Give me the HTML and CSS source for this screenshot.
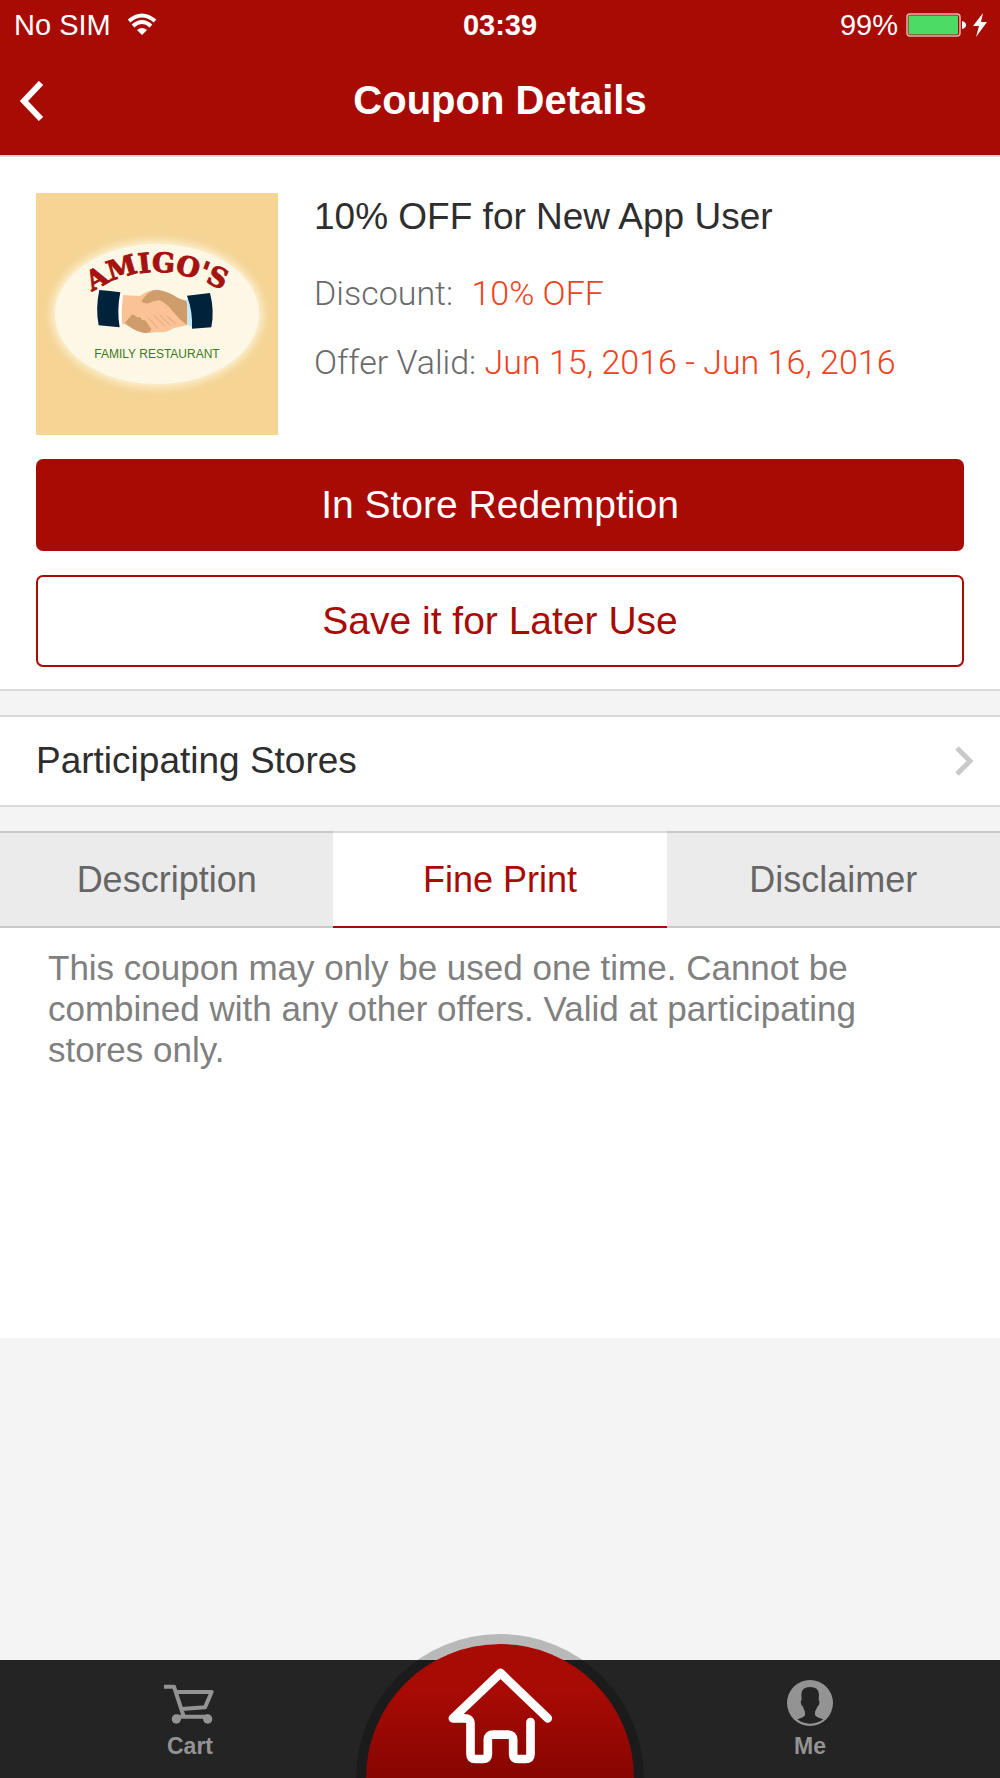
FILE: index.html
```
<!DOCTYPE html>
<html lang="en">
<head>
    <meta charset="UTF-8">
    <meta name="viewport" content="width=device-width, initial-scale=1.0">
    <title>Coupon Details</title>
    <link rel="stylesheet" href="styles.css">
</head>
<body>
    <header class="main-header">
        <div class="status-bar">
            <div class="status-left">
                <span>No SIM</span>
                <svg width="30" height="24" viewBox="0 0 30 24" fill="none" stroke="#fff" stroke-width="4">
                    <path d="M2 8Q15-3 28 8"/>
                    <path d="M6 13Q15 5 24 13"/>
                    <path d="M10 17Q15 13 20 17L15 22Z" fill="#fff" stroke="none"/>
                </svg>
            </div>
            <span class="status-time">03:39</span>
            <div class="status-right">
                <span>99%</span>
                <svg width="82" height="24" viewBox="0 0 82 24">
                    <rect x="1" y="1" width="53" height="22" rx="3" fill="none" stroke="#e5b5b2" stroke-width="1.500"/>
                    <rect x="2.500" y="2.500" width="49.500" height="19" rx="1" fill="#4cdb64"/>
                    <path d="M56 8Q60 9 60 12T56 16Z" fill="#fff"/>
                    <path d="M77 0L67 13H73L70 24L81 9H75Z" fill="#fff"/>
                </svg>
            </div>
        </div>
        <div class="title-bar">
            <button class="back-btn" type="button" aria-label="Back">
                <svg width="24" height="40" viewBox="0 0 24 40" fill="none" stroke="#fff" stroke-width="6">
                    <path d="M21 2L4 20L21 38"/>
                </svg>
            </button>
            <h1>Coupon Details</h1>
        </div>
    </header>

    <main>
        <section class="coupon">
            <div class="coupon-info">
                <svg class="coupon-logo" viewBox="0 0 242 242" role="img" aria-label="Amigo's Family Restaurant">
                    <defs>
                        <filter id="glow" x="-20%" y="-20%" width="140%" height="140%">
                            <feGaussianBlur stdDeviation="5"/>
                        </filter>
                        <path id="arc" d="M56 99Q118 59 190 99"/>
                    </defs>
                    <rect width="242" height="242" fill="#f5d494"/>
                    <ellipse cx="121" cy="121" rx="105" ry="73" fill="#fdf5dc" filter="url(#glow)"/>
                    <ellipse cx="121" cy="121" rx="102" ry="70" fill="#fdf7e6"/>
                    <text class="logo-name"><textPath href="#arc">AMIGO'S</textPath></text>
                    <!-- handshake -->
                    <g transform="translate(-16 -13) scale(.3333)">
                        <path d="M300 345L360 348Q385 328 412 330L500 365V436L462 444Q440 460 408 456Q380 464 350 452Q325 435 300 428Z" fill="#fbc296"/>
                        <path d="M364 363Q385 330 412 329Q450 335 475 355L502 364V436Q480 420 462 398Q435 365 418 361Q398 363 386 370Q370 372 364 363Z" fill="#cf9c6c"/>
                        <path d="M315 428L335 405Q345 402 350 412Q362 408 366 420Q378 418 382 430L394 448Q390 462 370 458Q335 450 315 428Z" fill="#cf9c6c"/>
                        <path d="M384 412L414 446M400 404L436 440M418 404L452 438M440 408L468 432" fill="none" stroke="#dda579" stroke-width="3"/>
                        <path d="M300 342L309 344Q303 390 306 432L294 440Z" fill="#fff"/>
                        <path d="M498 357L512 358Q516 400 518 442L502 434Q507 395 498 357Z" fill="#bfeafb"/>
                        <path d="M238 330Q272 332 301 337Q290 390 299 442L236 436Q226 385 238 330Z" fill="#00233b"/>
                        <path d="M501 347L570 339Q584 392 574 442L516 446Q519 395 501 347Z" fill="#00233b"/>
                    </g>
                    <text class="logo-tag" x="121" y="165" text-anchor="middle">FAMILY RESTAURANT</text>
                </svg>
                <div class="coupon-text">
                    <h2>10% OFF for New App User</h2>
                    <p>Discount: <span class="value discount">10% OFF</span></p>
                    <p>Offer Valid: <span class="value">Jun 15, 2016 - Jun 16, 2016</span></p>
                </div>
            </div>
            <button class="btn btn-primary" type="button">In Store Redemption</button>
            <button class="btn btn-outline" type="button">Save it for Later Use</button>
        </section>

        <a href="#" class="stores-link">
            Participating Stores
            <svg width="20" height="32" viewBox="0 0 20 32" fill="none" stroke="#c9c9c9" stroke-width="5">
                <path d="M3 3L16 16L3 29"/>
            </svg>
        </a>

        <section class="details">
            <div class="tabs" role="tablist">
                <button class="tab" type="button" role="tab">Description</button>
                <button class="tab active" type="button" role="tab" aria-selected="true">Fine Print</button>
                <button class="tab" type="button" role="tab">Disclaimer</button>
            </div>
            <p class="tab-content">This coupon may only be used one time. Cannot be combined with any other offers. Valid at participating stores only.</p>
        </section>
    </main>

    <nav class="bottom-nav">
        <a href="#" class="nav-link">
            <svg width="52" height="46" viewBox="97 121 156 138" fill="none" stroke="#939393" stroke-width="12" stroke-linejoin="round">
                <path d="M97 141H127L155 227M134 157H240L220 203L150 208M134 231H228"/>
                <circle cx="134" cy="238" r="14" fill="#939393" stroke="none"/>
                <circle cx="228" cy="238" r="14" fill="#939393" stroke="none"/>
            </svg>
            Cart
        </a>
        <a href="#" class="home-btn" aria-label="Home">
            <svg width="107" height="98" viewBox="320 170 320 294" fill="none" stroke="#fff" stroke-width="26" stroke-linecap="round" stroke-linejoin="round">
                <path d="M622 324L480 188L337 324H372Q390 324 390 340V432Q390 446 404 446H428Q442 446 442 432V388Q442 373 458 373H502Q518 373 518 388V432Q518 446 532 446H556Q570 446 570 432V335"/>
            </svg>
        </a>
        <a href="#" class="nav-link nav-me">
            <svg width="46" height="46" viewBox="114 117 138 138">
                <circle cx="183" cy="186" r="69" fill="#939393"/>
                <path d="M183 138Q158 138 157 160L158 177Q154 178 156 188Q158 194 161 196L168 212V222Q165 229 145 235Q161 248 183 248T223 235Q202 229 198 222V212L206 196Q209 194 211 188Q212 178 209 177L210 160Q209 138 183 138Z" fill="#242424"/>
            </svg>
            Me
        </a>
    </nav>
</body>
</html>
```

FILE: styles.css
```
* {
    margin: 0;
    padding: 0;
    box-sizing: border-box;
}

body {
    background: #f4f4f4;
    color: #2e2e2e;
    min-height: 100vh;
    display: flex;
    flex-direction: column;
    font-family: 'Liberation Sans', Arial, sans-serif;
    font-size: 36px;
}

a {
    color: inherit;
    text-decoration: none;
}

button {
    font: inherit;
    border: none;
    cursor: pointer;
}

svg {
    display: block;
    flex-shrink: 0;
}

.main-header {
    background: #a80a04;
    color: #fff;
    border-bottom: 2px solid #d9d9d9;
}

.status-bar {
    display: grid;
    grid-template-columns: 1fr auto 1fr;
    align-items: center;
    height: 50px;
    padding: 0 12px;
    font-size: 29px;
}

.status-left,
.status-right {
    display: flex;
    align-items: center;
    gap: 16px;
}

.status-left {
    padding-left: 2px;
}

.status-right {
    justify-content: flex-end;
    gap: 8px;
}

.status-time {
    font-weight: bold;
}

.title-bar {
    display: grid;
    grid-template-columns: 60px 1fr 60px;
    align-items: center;
    height: 105px;
    padding: 0 20px 4px;
}

.title-bar h1 {
    font-size: 40px;
    text-align: center;
}

.back-btn {
    background: none;
    justify-self: start;
}

.coupon {
    background: #fff;
    padding: 36px 36px 22px;
    border-bottom: 2px solid #d9d9d9;
}

.coupon-info {
    display: flex;
    gap: 36px;
}

.coupon-logo {
    width: 242px;
    height: 242px;
}

.logo-name {
    font: bold 27px 'DejaVu Serif', serif;
    fill: #a5120f;
    stroke: #a5120f;
    stroke-width: 1px;
}

.logo-tag {
    font: 12px 'Liberation Sans Narrow', 'Liberation Sans', sans-serif;
    fill: #3c7a22;
}

.coupon-text h2 {
    font-size: 37px;
    font-weight: normal;
    line-height: 48px;
    margin-bottom: 18px;
}

.coupon-text p {
    font-family: Roboto, 'Liberation Sans', sans-serif;
    font-size: 34px;
    font-weight: 300;
    line-height: 69px;
    color: #6a6a6a;
}

.coupon-text .value {
    color: #f0421c;
}

.discount {
    margin-left: 10px;
}

.btn {
    display: block;
    width: 100%;
    height: 92px;
    margin-top: 24px;
    border: 2px solid #a80a04;
    border-radius: 7px;
    font-size: 39px;
}

.btn-primary {
    background: #a80a04;
    color: #fff;
}

.btn-outline {
    background: #fff;
    color: #a80a04;
}

.stores-link {
    display: flex;
    justify-content: space-between;
    align-items: center;
    height: 92px;
    margin: 24px 0;
    padding: 0 26px 0 36px;
    background: #fff;
    border-top: 2px solid #d9d9d9;
    border-bottom: 2px solid #d9d9d9;
    font-size: 37px;
}

.details {
    background: #fff;
    min-height: 507px;
}

.tabs {
    display: grid;
    grid-template-columns: repeat(3, 1fr);
}

.tab {
    height: 97px;
    background: #ebebeb;
    color: #666;
    border-top: 2px solid #c9c9c9;
    border-bottom: 2px solid #c9c9c9;
}

.tab.active {
    background: #fff;
    color: #a80a04;
    border-top-color: #d9d9d9;
    border-bottom-color: #a80a04;
}

.tab-content {
    padding: 19px 100px 20px 48px;
    font-size: 35px;
    line-height: 41px;
    color: #808080;
}

.bottom-nav {
    position: relative;
    display: grid;
    grid-template-columns: 1fr 240px 1fr;
    height: 118px;
    margin-top: auto;
    background: #242424;
    color: #939393;
}

.nav-link {
    display: flex;
    flex-direction: column;
    align-items: center;
    gap: 7px;
    padding-top: 20px;
    font-size: 23px;
    font-weight: bold;
}

.nav-me {
    grid-column: 3;
}

/* half circle that rises out of the bar */
.home-btn {
    position: absolute;
    left: 50%;
    bottom: 0;
    width: 288px;
    height: 144px;
    margin-left: -144px;
    padding-top: 23px;
    display: flex;
    justify-content: center;
    border: 10px solid rgba(0, 0, 0, 0.24);
    border-bottom: none;
    border-radius: 144px 144px 0 0;
    background: linear-gradient(#a80a04 35%, #870502) padding-box;
}
```
